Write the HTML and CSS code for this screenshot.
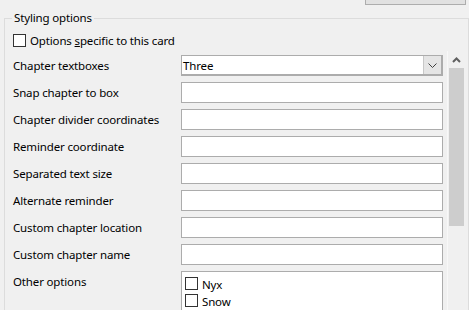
FILE: index.html
```html
<!DOCTYPE html>
<html>
<head>
<meta charset="utf-8">
<link rel="stylesheet" href="styles.css">
</head>
<body>
<div class="top">
  <div class="btn"></div>
</div>
<div class="group">
  <span class="legend">Styling options</span>
  <div class="opt">
    <span class="cb"></span>
    <span class="opt-text">Options <u>s</u>pecific to this card</span>
  </div>
  <div class="panel">
    <div class="rows">
      <div class="row">
        <span class="label">Chapter textboxes</span>
        <div class="combo"><span class="combo-val">Three</span><span class="drop"><svg width="9" height="5" viewBox="0 0 9 5"><path d="M0.5 0.5 L4.5 4.5 L8.5 0.5" fill="none" stroke="#404040" stroke-width="1"/></svg></span></div>
      </div>
      <div class="row"><span class="label">Snap chapter to box</span><div class="tb"></div></div>
      <div class="row"><span class="label">Chapter divider coordinates</span><div class="tb"></div></div>
      <div class="row"><span class="label">Reminder coordinate</span><div class="tb"></div></div>
      <div class="row"><span class="label">Separated text size</span><div class="tb"></div></div>
      <div class="row"><span class="label">Alternate reminder</span><div class="tb"></div></div>
      <div class="row"><span class="label">Custom chapter location</span><div class="tb"></div></div>
      <div class="row"><span class="label">Custom chapter name</span><div class="tb"></div></div>
      <div class="row row-top">
        <span class="label label-top">Other options</span>
        <div class="list">
          <div class="item"><span class="cb"></span><span>Nyx</span></div>
          <div class="item"><span class="cb"></span><span>Snow</span></div>
        </div>
      </div>
    </div>
    <div class="scroll">
      <div class="arrow"><svg width="9" height="6" viewBox="0 0 9 6"><path d="M1 5 L4.5 1.5 L8 5" fill="none" stroke="#606060" stroke-width="2"/></svg></div>
      <div class="thumb"></div>
    </div>
  </div>
</div>
</body>
</html>
```

FILE: styles.css
```css
html, body {
  margin: 0;
  padding: 0;
  background: #f0f0f0;
  overflow: hidden;
  width: 469px;
  height: 310px;
  font-family: "Noto Sans", "Open Sans", sans-serif;
  font-size: 11.5px;
  letter-spacing: -0.15px;
  color: #000;
}
.top {
  height: 4px;
  display: flex;
  justify-content: flex-end;
}
.btn {
  width: 99px;
  height: 20px;
  margin-top: -17px;
  margin-right: 3px;
  background: #e1e1e1;
  border: 1px solid #adadad;
}
.group {
  position: relative;
  margin: 14px 0 0 4px;
  width: 465px;
  height: 300px;
  border: 1px solid #dcdcdc;
  border-bottom: none;
  padding-left: 8px;
  box-sizing: border-box;
}
.legend {
  position: absolute;
  left: 7px;
  top: -10px;
  padding: 0 2px;
  background: #f0f0f0;
  line-height: 18px;
}
.opt {
  margin-top: 15px;
  height: 13px;
  display: flex;
  align-items: center;
  gap: 4px;
}
.cb {
  width: 11px;
  height: 11px;
  border: 1px solid #333;
  background: #fff;
  flex: none;
}
.opt-text {
  line-height: 13px;
}
.panel {
  margin-top: 4px;
  display: flex;
}
.rows {
  padding-top: 4px;
  display: flex;
  flex-direction: column;
  gap: 6px;
}
.row {
  display: flex;
  align-items: center;
  height: 21px;
}
.row-top {
  align-items: flex-start;
  height: 50px;
}
.label {
  width: 168px;
  flex: none;
}
.label-top {
  margin-top: 3px;
}
.tb, .combo {
  width: 262px;
  height: 21px;
  box-sizing: border-box;
  border: 1px solid #acacac;
  background: #fff;
}
.combo {
  display: flex;
  align-items: center;
  border-width: 1px 2px 2px 1px;
  border-color: #acacac;
}
.combo-val {
  flex: 1;
  padding-left: 1px;
}
.drop {
  width: 17px;
  height: 18px;
  background: #e5e5e5;
  border-left: 1px solid #c8c8c8;
  display: flex;
  align-items: center;
  justify-content: center;
}
.list {
  width: 262px;
  height: 50px;
  box-sizing: border-box;
  border: 1px solid #acacac;
  background: #fff;
  padding: 4px 0 0 3px;
}
.item {
  display: flex;
  align-items: center;
  gap: 4px;
  height: 17px;
}
.item .cb {
  margin-top: -3px;
}
.scroll {
  margin-left: 4px;
  width: 17px;
  height: 260px;
  background: #f0f0f0;
  border-left: 1px solid #f8f8f8;
  box-sizing: border-box;
  display: flex;
  flex-direction: column;
  align-items: center;
}
.arrow {
  height: 17px;
  display: flex;
  align-items: center;
  justify-content: center;
  padding-top: 1px;
  box-sizing: border-box;
}
.thumb {
  width: 15px;
  height: 158px;
  background: #cdcdcd;
}
```
